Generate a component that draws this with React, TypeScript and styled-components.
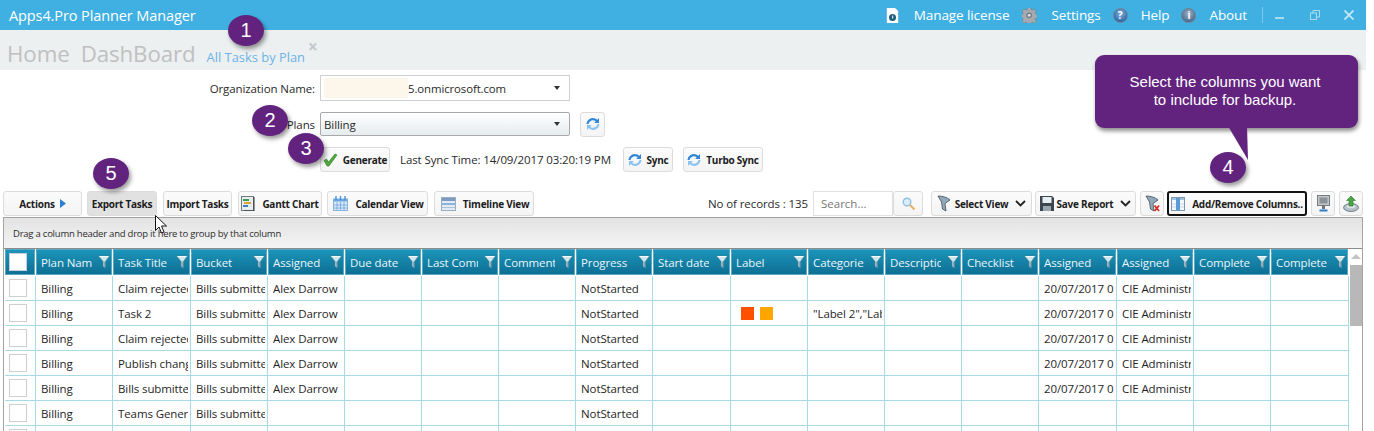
import React from "react";
import styled, { createGlobalStyle } from "styled-components";

const Global = createGlobalStyle`
  html, body { margin: 0; padding: 0; background: #fff; overflow: hidden; }
  * { box-sizing: border-box; }
  body { font-family: "Open Sans", "Liberation Sans", sans-serif; color: #2a2a2a; }
`;

const Page = styled.div`
  position: relative;
  width: 1374px;
  height: 431px;
  overflow: hidden;
  background: #fff;
`;

const TitleBar = styled.header`
  width: 1366px;
  height: 30px;
  background: #40b0e2;
  display: flex;
  align-items: center;
  padding-left: 9px;
  color: #fff;
`;
const AppName = styled.div`
  font-size: 14.5px;
  letter-spacing: -0.1px;
  flex: 1;
`;
const TopItem = styled.div<{ $gap: number; $ml: number }>`
  display: flex;
  align-items: center;
  gap: ${(p) => p.$gap}px;
  margin-left: ${(p) => p.$ml}px;
  font-size: 13.5px;
  letter-spacing: -0.1px;
`;
const WinSep = styled.span`
  width: 1px;
  height: 16px;
  background: #7cc9ec;
  margin-left: 15px;
`;
const WinBtn = styled.span<{ $ml: number }>`
  display: flex;
  margin-left: ${(p) => p.$ml}px;
`;
const TopEnd = styled.div`
  width: 12px;
`;

const NavBar = styled.nav`
  width: 1366px;
  height: 40px;
  background: #ecf0f1;
  display: flex;
  align-items: flex-end;
  padding: 0 0 0 7px;
`;
const NavBig = styled.span`
  font-size: 22.3px;
  line-height: 32px;
  color: #bfc0c0;
  margin-right: 11px;
  letter-spacing: -0.1px;
`;
const NavTab = styled.span`
  font-size: 12.9px;
  line-height: 20px;
  color: #6db3e6;
  margin-bottom: 3px;
`;
const NavClose = styled.span`
  align-self: flex-start;
  margin: 10px 0 0 3px;
  font-size: 17px;
  line-height: 14px;
  font-weight: 700;
  color: #c4c8ca;
`;

const Form = styled.section`
  display: grid;
  grid-template-columns: 315px 250px auto;
  column-gap: 5px;
  padding-top: 5px;
  height: 121px;
  grid-template-rows: 26px 24px 25px;
  row-gap: 11px;
  align-content: start;
`;
const FieldLabel = styled.label`
  font-size: 11.5px;
  letter-spacing: -0.1px;
  text-align: right;
  align-self: center;
`;
const OrgSelect = styled.div`
  border: 1px solid #d0d0d0;
  background: #fff;
  display: flex;
  align-items: center;
  padding: 0 9px 0 3px;
  font-size: 11.4px;
  letter-spacing: -0.1px;
`;
const Masked = styled.span`
  width: 84px;
  height: 20px;
  margin-right: 0;
  background: #fdf6ea;
`;
const Caret = styled.span`
  margin-left: auto;
  width: 0;
  height: 0;
  border-left: 3.5px solid transparent;
  border-right: 3.5px solid transparent;
  border-top: 4px solid #333;
`;
const PlanSelect = styled.div`
  border: 1px solid #a9a9a9;
  border-radius: 2px;
  background: linear-gradient(#ffffff, #e6ecf0);
  display: flex;
  align-items: center;
  padding: 0 9px 0 3px;
  font-size: 11.5px;
  letter-spacing: -0.1px;
`;
const PlanSide = styled.div`
  display: flex;
  align-items: center;
  padding-left: 5px;
`;
const ActionRow = styled.div`
  grid-column: 2 / 4;
  display: flex;
  align-items: center;
  white-space: nowrap;
`;
const SyncText = styled.span`
  font-size: 11.5px;
  letter-spacing: -0.1px;
  margin: 0 10px 0 10px;
  width: 213px;
`;

const Btn = styled.button<{
  $w: number;
  $ml?: number;
  $h?: number;
  $gap?: number;
  $pl?: number;
  $active?: boolean;
  $hot?: boolean;
}>`
  width: ${(p) => p.$w}px;
  height: ${(p) => p.$h ?? 25}px;
  margin-left: ${(p) => p.$ml ?? 0}px;
  flex: none;
  padding: 0 0 0 ${(p) => p.$pl ?? 0}px;
  display: inline-flex;
  align-items: center;
  justify-content: center;
  gap: ${(p) => p.$gap ?? 5}px;
  font-family: "Open Sans", "Liberation Sans", sans-serif;
  font-weight: 700;
  font-size: 10px;
  letter-spacing: -0.25px;
  color: #1c1c1c;
  white-space: nowrap;
  border-radius: 3px;
  border: ${(p) => (p.$hot ? "2px solid #111" : "1px solid #dcdcdc")};
  background: ${(p) => (p.$active ? "#e1e1e1" : "linear-gradient(#fbfbfb, #f4f4f4)")};
`;
const ChevronSlot = styled.span`
  display: flex;
  margin-left: 4px;
`;

const Toolbar = styled.div`
  display: flex;
  align-items: center;
  height: 25px;
  width: 1363px;
  padding-left: 3px;
`;
const Records = styled.span`
  margin-left: auto;
  font-size: 11.5px;
  letter-spacing: -0.1px;
  margin-right: 5px;
  white-space: nowrap;
`;
const Search = styled.div`
  width: 80px;
  height: 25px;
  border: 1px solid #e0e0e0;
  font-size: 11.5px;
  color: #777;
  display: flex;
  align-items: center;
  padding-left: 7px;
`;

const GridPanel = styled.section`
  margin: 1px 0 0 3px;
  width: 1360px;
  height: 300px;
  border: 1px solid #a3a3a3;
  border-bottom: 0;
  background: #fff;
`;
const GroupPanel = styled.div`
  height: 31px;
  background: linear-gradient(#e3e3e3, #f4f4f5);
  border-bottom: 1px solid #8c8c8c;
  display: flex;
  align-items: center;
  padding-left: 9px;
  font-size: 9.5px;
  letter-spacing: -0.23px;
  color: #2c2c2c;
`;
const GridBody = styled.div`
  display: flex;
  padding-left: 1px;
`;

const COLS = "31px 77px 78px 77px 77px 77px 77px 77px 77px 78px 77px 77px 77px 77px 78px 77px 77px 78px";

const Table = styled.div`
  display: grid;
  grid-template-columns: ${COLS};
  grid-template-rows: 27px;
  grid-auto-rows: 25px;
  align-content: start;
`;
const HeaderCell = styled.div`
  height: 26px;
  background: linear-gradient(#1b96bb, #0e6d92);
  box-shadow: inset 0 0 0 1px #5ba8c2;
  display: flex;
  align-items: center;
  padding: 0 2px 0 5px;
  color: #e8f6fb;
  font-size: 11.5px;
  letter-spacing: -0.1px;
  margin-right: 1px;
`;
const HeadText = styled.span`
  width: 51px;
  overflow: hidden;
  white-space: nowrap;
  flex: none;
`;
const HeadFunnel = styled.span`
  margin-left: auto;
  display: flex;
`;
const HeadBox = styled.div`
  height: 26px;
  background: linear-gradient(#1b96bb, #0e6d92);
  box-shadow: inset 0 0 0 1px #5ba8c2;
  margin-right: 1px;
  display: flex;
  align-items: center;
  padding-left: 4px;
`;
const HeadCheck = styled.span`
  width: 18px;
  height: 18px;
  background: #fff;
  border: 1px solid #ccd;
`;
const Cell = styled.div`
  border-right: 1px solid #a8d9e6;
  border-bottom: 1px solid #a8d9e6;
  font-size: 11.5px;
  letter-spacing: -0.1px;
  color: #1f1f1f;
  padding: 0 2px 0 5px;
  display: flex;
  align-items: center;
  height: 25px;
  min-width: 0;
`;
const CellText = styled.span`
  overflow: hidden;
  white-space: nowrap;
  min-width: 0;
`;
const CheckCell = styled(Cell)`
  padding-left: 4px;
`;
const RowCheck = styled.span`
  width: 18px;
  height: 18px;
  border: 1px solid #cfcfcf;
  flex: none;
`;
const Chip = styled.span<{ $c: string }>`
  width: 13px;
  height: 13px;
  background: ${(p) => p.$c};
  margin-right: 6px;
  flex: none;
  position: relative;
  left: 5px;
`;
const Scroll = styled.div`
  width: 13px;
  height: 182px;
  background: #fff;
  display: flex;
  flex-direction: column;
  align-items: center;
  padding-top: 5px;
`;
const ScrollUp = styled.span`
  width: 0;
  height: 0;
  border-left: 5px solid transparent;
  border-right: 5px solid transparent;
  border-bottom: 5px solid #c4c4c4;
`;
const Thumb = styled.span`
  width: 12px;
  height: 61px;
  background: #b8b8b8;
  margin-top: 6px;
`;

const Bubble = styled.span<{ $x: number; $y: number }>`
  position: absolute;
  left: ${(p) => p.$x}px;
  top: ${(p) => p.$y}px;
  width: 36px;
  height: 31px;
  border-radius: 50%;
  background: #62237f;
  color: #fff;
  font-family: "Liberation Sans", sans-serif;
  font-size: 20px;
  line-height: 31px;
  text-align: center;
  box-shadow: 2px 3px 4px rgba(0, 0, 0, 0.4);
`;
const Callout = styled.div`
  position: absolute;
  left: 1095px;
  top: 55px;
  width: 263px;
  height: 73px;
  border-radius: 9px;
  background: #62237f;
  color: #fff;
  font-family: "Liberation Sans", sans-serif;
  font-size: 15px;
  line-height: 18px;
  text-align: center;
  padding: 18px 3px 0 0;
  box-shadow: 1px 3px 4px rgba(0, 0, 0, 0.45);
`;
const Tail = styled.svg`
  position: absolute;
  left: 1226px;
  top: 126px;
`;
const Cursor = styled.svg`
  position: absolute;
  left: 155px;
  top: 215px;
`;

/* icons */
const Refresh = ({ s = 14 }: { s?: number }) => (
  <svg width={s} height={s} viewBox="0 0 14 14" fill="none">
    <path d="M1.500 7C1.800 3.500 5.600 1.300 8.800 2.600c.9.400 1.500.9 2 1.500" stroke="#2f86d8" strokeWidth="2.200" />
    <path d="M13 1v5H8.200z" fill="#2f86d8" />
    <path d="M12.500 7c-.3 3.500-4.100 5.700-7.300 4.400-.9-.4-1.500-.9-2-1.500" stroke="#8cc2ef" strokeWidth="2.200" />
    <path d="M1 13V8h4.800z" fill="#8cc2ef" />
  </svg>
);
const Check = () => (
  <svg width="15" height="14" viewBox="0 0 15 14">
    <path d="M1 7.500l2.500-1.500 2 3L12 1l2 1-8 11H4z" fill="#4fa83a" stroke="#2d7a25" strokeWidth=".6" />
  </svg>
);
const Gantt = () => (
  <svg width="14" height="15" viewBox="0 0 14 15">
    <rect x=".5" y=".5" width="12" height="14" fill="#e8eef0" stroke="#6d7b7d" />
    <rect x="2" y="3" width="6" height="2" fill="#3e9a55" />
    <rect x="3" y="6" width="7" height="2" fill="#d9a53a" />
    <rect x="2" y="9" width="5" height="2" fill="#3f7fc0" />
    <path d="M13 1v14H3" fill="none" stroke="#333" />
  </svg>
);
const Calendar = () => (
  <svg width="15" height="15" viewBox="0 0 15 15">
    <rect x=".5" y="3" width="14" height="11.5" fill="#dbe9f7" stroke="#86b4e0" />
    <rect x="1" y="3" width="13" height="2.500" fill="#6ba6e0" />
    <path d="M3 0v4M7.500 0v4M12 0v4" stroke="#4f93d8" strokeWidth="1.400" />
    <path d="M1 9h13M1 12h13M4 6v8M7.500 6v8M11 6v8" stroke="#6fa6dc" strokeWidth=".8" />
  </svg>
);
const Timeline = () => (
  <svg width="15" height="14" viewBox="0 0 15 14">
    <rect x=".5" y=".5" width="14" height="13" fill="#e2eaf3" stroke="#9aaec3" />
    <rect x="1" y="1" width="13" height="3" fill="#7c9cbe" />
    <rect x="1" y="6" width="13" height="2" fill="#8fb4da" />
    <path d="M1 10.500h13" stroke="#b0c2d4" />
  </svg>
);
const Funnel = () => (
  <svg width="12" height="14" viewBox="0 0 12 14">
    <path d="M.5 1h11L7.500 6.500V13L5 11.500v-5z" fill="#cfe6ec" stroke="#3f7f98" strokeWidth=".7" />
    <path d="M1.500 1.500h9" stroke="#f2fbfd" />
    <path d="M6.300 6.500V12" stroke="#87a3ae" strokeWidth="1.200" />
  </svg>
);
const Magnifier = () => (
  <svg width="15" height="15" viewBox="0 0 15 15">
    <circle cx="6" cy="6" r="3.800" fill="#dcedfb" stroke="#8fbfe6" strokeWidth="1.400" />
    <path d="M9 9l4.500 4.500" stroke="#e6b26a" strokeWidth="2.200" />
  </svg>
);
const ViewFunnel = ({ x }: { x?: boolean }) => (
  <svg width="15" height="18" viewBox="0 0 15 18">
    <path d="M1 1c4 0 9 1 12 4L8 8.500 9 16 5.500 14 4.500 7z" fill="#93a8b8" stroke="#3f4d58" strokeWidth=".8" />
    {x && <path d="M9.500 10.500l4.500 5.500M14 10.500L9.500 16" stroke="#d2301f" strokeWidth="1.800" />}
  </svg>
);
const Chevron = () => (
  <svg width="11" height="7" viewBox="0 0 11 7" fill="none">
    <path d="M1 1l4.500 4.500L10 1" stroke="#222" strokeWidth="1.800" />
  </svg>
);
const Save = () => (
  <svg width="14" height="15" viewBox="0 0 14 15">
    <path d="M0 0h12l2 2v13H0z" fill="#3c4650" />
    <rect x="2.500" y="1" width="9" height="6" fill="#e9eef2" />
    <rect x="3" y="10" width="8" height="5" fill="#9aa5ad" />
  </svg>
);
const Columns = () => (
  <svg width="14" height="14" viewBox="0 0 14 14">
    <rect x=".5" y=".5" width="13" height="13" fill="#f4f8fb" stroke="#7d99b3" />
    <rect x="1" y="1" width="12" height="2" fill="#a9bfd2" />
    <rect x="5" y="1" width="4" height="12" fill="#5a9ad6" />
    <path d="M1 7h4M9 7h4M1 10h4M9 10h4" stroke="#b7cbdc" strokeWidth=".7" />
  </svg>
);
const Monitor = () => (
  <svg width="13" height="18" viewBox="0 0 13 18">
    <rect x=".5" y=".5" width="12" height="10" fill="#c2c6c8" stroke="#767d81" />
    <rect x="2.500" y="2.500" width="8" height="6" fill="#8b9397" />
    <rect x="5" y="10" width="3" height="4" fill="#6d7478" />
    <path d="M2.500 15.500h8" stroke="#2f7fc4" strokeWidth="2" />
  </svg>
);
const Upload = () => (
  <svg width="16" height="18" viewBox="0 0 16 18">
    <ellipse cx="8" cy="12.500" rx="7.500" ry="4" fill="#b3bec7" stroke="#5f6d78" strokeWidth=".8" />
    <ellipse cx="8" cy="11.500" rx="4.500" ry="1.800" fill="#dde4e9" />
    <path d="M8 1l4.500 4.500H10V11H6V5.500H3.500z" fill="#4aa548" stroke="#2d7a2b" strokeWidth=".6" />
  </svg>
);
const License = () => (
  <svg width="13" height="15" viewBox="0 0 13 15">
    <path d="M1 0h8l3 3v12H1z" fill="#fff" stroke="#dbe3e8" strokeWidth=".5" />
    <circle cx="6.500" cy="9.500" r="3.500" fill="#1d5f7e" />
    <rect x="6" y="7.500" width="1.200" height="3" fill="#d8eaf2" />
  </svg>
);
const Gear = () => (
  <svg width="15" height="15" viewBox="0 0 24 24">
    <path
      d="M9.500 0h5l.7 3.400 2.600 1.100 2.900-1.900 3.400 3.400-1.900 2.900 1.100 2.600 3.400.7v5l-3.400.7-1.100 2.600 1.900 2.900-3.400 3.400-2.900-1.900-2.600 1.100-.7 3.400h-5l-.7-3.400-2.600-1.100-2.900 1.900-3.400-3.400 1.900-2.900-1.100-2.600-3.400-.7v-5l3.400-.7 1.100-2.600-1.900-2.900 3.400-3.400 2.900 1.900 2.600-1.100z"
      transform="translate(0 -1) scale(.96)"
      fill="#a3abb0"
      stroke="#6f7a80"
    />
    <circle cx="11.500" cy="11.500" r="4.500" fill="#6f7a80" />
    <circle cx="11.500" cy="11.500" r="2.500" fill="#d6dcdf" />
  </svg>
);
const Orb = styled.span`
  width: 15px;
  height: 15px;
  border-radius: 50%;
  background: radial-gradient(circle at 50% 35%, #7fb0e0, #2f6aa8 75%);
  border: 1px solid #70808f;
  color: #fff;
  font-size: 10px;
  font-weight: 700;
  line-height: 13px;
  text-align: center;
`;
const GreyOrb = styled(Orb)`
  background: radial-gradient(circle at 50% 35%, #9fb2c6, #4a6c90 75%);
`;
const TriRight = () => (
  <svg width="6" height="9" viewBox="0 0 6 9">
    <path d="M0 0l6 4.500L0 9z" fill="#2f7fd0" />
  </svg>
);

const HEADERS = [
  "Plan Name", "Task Title", "Bucket", "Assigned", "Due date", "Last Comment", "Comments",
  "Progress", "Start date", "Label", "Categories", "Description", "Checklist",
  "Assigned", "Assigned", "Completed", "Completed",
];

type Row = { title?: string; bucket?: string; who?: string; prog?: string; date?: string; by?: string; plan?: string; labels?: boolean };
const BASE = { bucket: "Bills submitted", prog: "NotStarted", date: "20/07/2017 03:20", by: "CIE Administrator", plan: "Billing", who: "Alex Darrow" };
const ROWS: Row[] = [
  { ...BASE, title: "Claim rejected" },
  { ...BASE, title: "Task 2", labels: true },
  { ...BASE, title: "Claim rejected" },
  { ...BASE, title: "Publish changes" },
  { ...BASE, title: "Bills submitted" },
  { ...BASE, title: "Teams General", who: "", date: "", by: "" },
  {},
];

export default function App() {
  return (
    <Page>
      <Global />
      <TitleBar>
        <AppName>Apps4.Pro Planner Manager</AppName>
        <TopItem $gap={15} $ml={0}><License />Manage license</TopItem>
        <TopItem $gap={14} $ml={13}><Gear />Settings</TopItem>
        <TopItem $gap={13} $ml={12}><Orb>?</Orb>Help</TopItem>
        <TopItem $gap={13} $ml={12}><GreyOrb>i</GreyOrb>About</TopItem>
        <WinSep />
        <WinBtn $ml={12}>
          <svg width="9" height="10" viewBox="0 0 9 10"><rect y="7" width="9" height="2" fill="#a9dcf3" /></svg>
        </WinBtn>
        <WinBtn $ml={26}>
          <svg width="10" height="10" viewBox="0 0 10 10" fill="none" stroke="#a9dcf3">
            <rect x=".5" y="3" width="6" height="6.500" />
            <path d="M3 3V.5h6.500V7H7" />
          </svg>
        </WinBtn>
        <WinBtn $ml={24}>
          <svg width="10" height="10" viewBox="0 0 10 10" stroke="#c4e8f8" strokeWidth="1.800">
            <path d="M.5.5l9 9M9.500.5l-9 9" />
          </svg>
        </WinBtn>
        <TopEnd />
      </TitleBar>

      <NavBar>
        <NavBig>Home</NavBig>
        <NavBig>DashBoard</NavBig>
        <NavTab>All Tasks by Plan</NavTab>
        <NavClose>×</NavClose>
      </NavBar>

      <Form>
        <FieldLabel>Organization Name:</FieldLabel>
        <OrgSelect><Masked />5.onmicrosoft.com<Caret /></OrgSelect>
        <span />
        <FieldLabel>Plans</FieldLabel>
        <PlanSelect>Billing<Caret /></PlanSelect>
        <PlanSide>
          <Btn $w={25} $h={25}><Refresh /></Btn>
        </PlanSide>
        <span />
        <ActionRow>
          <Btn $w={70}><Check />Generate</Btn>
          <SyncText>Last Sync Time: 14/09/2017 03:20:19 PM</SyncText>
          <Btn $w={50}><Refresh />Sync</Btn>
          <Btn $w={80} $ml={10}><Refresh />Turbo Sync</Btn>
        </ActionRow>
      </Form>

      <Toolbar>
        <Btn $w={79}>Actions <TriRight /></Btn>
        <Btn $w={70} $ml={5} $active>Export Tasks</Btn>
        <Btn $w={69} $ml={6}>Import Tasks</Btn>
        <Btn $w={84} $ml={6} $gap={7}><Gantt />Gantt Chart</Btn>
        <Btn $w={101} $ml={5} $gap={7} $pl={2}><Calendar />Calendar View</Btn>
        <Btn $w={100} $ml={6} $gap={7} $pl={2}><Timeline />Timeline View</Btn>
        <Records>No of records : 135</Records>
        <Search>Search...</Search>
        <Btn $w={30}><Magnifier /></Btn>
        <Btn $w={101} $ml={8} $gap={3}><ViewFunnel />Select View<ChevronSlot><Chevron /></ChevronSlot></Btn>
        <Btn $w={101} $ml={3} $gap={3}><Save />Save Report<ChevronSlot><Chevron /></ChevronSlot></Btn>
        <Btn $w={24} $ml={4}><ViewFunnel x /></Btn>
        <Btn $w={140} $ml={3} $hot $gap={7}><Columns />Add/Remove Columns..</Btn>
        <Btn $w={24} $ml={4}><Monitor /></Btn>
        <Btn $w={24} $ml={4}><Upload /></Btn>
      </Toolbar>

      <GridPanel>
        <GroupPanel>Drag a column header and drop it here to group by that column</GroupPanel>
        <GridBody>
          <Table>
            <HeadBox><HeadCheck /></HeadBox>
            {HEADERS.map((h, i) => (
              <HeaderCell key={i}>
                <HeadText>{h}</HeadText>
                <HeadFunnel><Funnel /></HeadFunnel>
              </HeaderCell>
            ))}
            {ROWS.map((r, i) => (
              <React.Fragment key={i}>
                <CheckCell><RowCheck /></CheckCell>
                <Cell><CellText>{r.plan}</CellText></Cell>
                <Cell><CellText>{r.title}</CellText></Cell>
                <Cell><CellText>{r.bucket}</CellText></Cell>
                <Cell><CellText>{r.who}</CellText></Cell>
                <Cell /><Cell /><Cell />
                <Cell><CellText>{r.prog}</CellText></Cell>
                <Cell />
                <Cell>{r.labels && <><Chip $c="#ff5000" /><Chip $c="#ffa500" /></>}</Cell>
                <Cell><CellText>{r.labels && '"Label 2","Label 3"'}</CellText></Cell>
                <Cell /><Cell />
                <Cell><CellText>{r.date}</CellText></Cell>
                <Cell><CellText>{r.by}</CellText></Cell>
                <Cell /><Cell />
              </React.Fragment>
            ))}
          </Table>
          <Scroll><ScrollUp /><Thumb /></Scroll>
        </GridBody>
      </GridPanel>

      <Bubble $x={228} $y={15}>1</Bubble>
      <Bubble $x={252} $y={105}>2</Bubble>
      <Bubble $x={288} $y={133}>3</Bubble>
      <Bubble $x={1210} $y={152}>4</Bubble>
      <Bubble $x={93} $y={158}>5</Bubble>
      <Callout>Select the columns you want<br />to include for backup.</Callout>
      <Tail width="24" height="36" viewBox="0 0 24 36"><path d="M2 0h19l1 34z" fill="#62237f" /></Tail>
      <Cursor width="13" height="19" viewBox="0 0 13 19">
        <path d="M.5.5v15l3.500-3.500 2.500 6 2.500-1-2.500-6h5z" fill="#fff" stroke="#111" />
      </Cursor>
    </Page>
  );
}
